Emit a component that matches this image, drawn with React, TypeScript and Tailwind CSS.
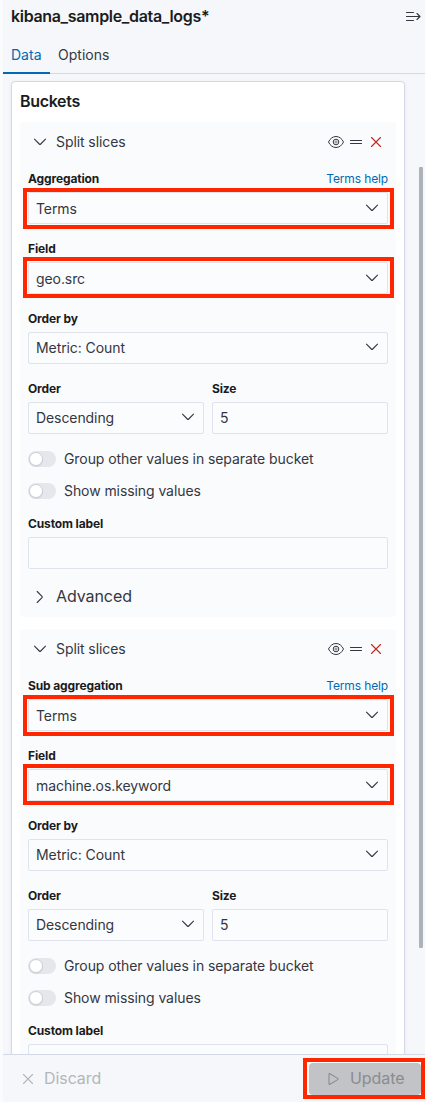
import React from "react";

type IconProps = { d: string; className?: string };

function Icon({ d, className = "" }: IconProps) {
  return (
    <svg
      viewBox="0 0 16 16"
      className={`h-4 w-4 shrink-0 ${className}`}
      fill="none"
      stroke="currentColor"
      strokeWidth="1.1"
      strokeLinecap="round"
      strokeLinejoin="round"
    >
      <path d={d} />
    </svg>
  );
}

function EyeIcon() {
  return (
    <svg viewBox="0 0 16 16" className="h-4 w-4 shrink-0" fill="none" stroke="currentColor">
      <path d="M.5 8C2.200 4.500 4.800 2.500 8 2.500S13.800 4.500 15.500 8C13.800 11.500 11.200 13.500 8 13.500S2.200 11.500.5 8Z" />
      <circle cx="8" cy="8" r="2.800" />
      <circle cx="8" cy="8" r="1.100" strokeWidth="0.6" />
    </svg>
  );
}

const CHEVRON_DOWN = "M2.5 5.2 7.3 10q.7.7 1.4 0l4.8-4.8";
const CHEVRON_RIGHT = "M5.2 2.5 10 7.3q.7.7 0 1.4l-4.8 4.8";
const CROSS = "M3.500 3.500l9 9M12.500 3.500l-9 9";
const GRAB = "M2.500 6.500h11M2.500 9.500h11";
const MENU_RIGHT = "M1.500 4.500h7M1.500 8.500h13.500M1.500 12.500h7M12 5.500l3 3-3 3";
const PLAY = "M4 3.200v9.600q0 1 .9.500l7.800-4.700q.8-.6 0-1.200L4.900 2.700Q4 2.200 4 3.200Z";

type Mark = "upper" | "lower";

type FieldProps = {
  label: string;
  value?: string;
  select?: boolean;
  help?: string;
  mark?: Mark;
};

function Field({ label, value = "", select = false, help, mark }: FieldProps) {
  return (
    <div className="flex min-w-0 flex-1 flex-col gap-1">
      <div className="flex h-[18px] items-center justify-between text-[12px] leading-[18px] tracking-[-0.13px]">
        <span className="font-bold text-[#1a1c21]">{label}</span>
        {help && <a className="text-[#006bb4]">{help}</a>}
      </div>
      <div className="relative flex h-8 items-start justify-between rounded-[2px] border border-[#e0e3ee] bg-[#fbfcfd] px-[7px]">
        <span className={mark ? "mt-1.5" : "mt-[5px]"}>{value}</span>
        {select && <Icon d={CHEVRON_DOWN} className={mark ? "mt-[7px]" : "mt-1.5"} />}
        {mark === "upper" && (
          <div className="absolute -top-[5px] -right-[7px] -bottom-[6px] -left-[6px] border-4 border-[#ff2600]" />
        )}
        {mark === "lower" && (
          <div className="absolute -top-[6px] -right-[7px] -bottom-[5px] -left-[6px] border-4 border-[#ff2600]" />
        )}
      </div>
    </div>
  );
}

function Toggle({ label }: { label: string }) {
  return (
    <div className="flex h-4 items-center gap-2">
      <span className="flex h-4 w-7 items-center rounded-full bg-[#e5e7ed] pl-px">
        <span className="h-3.5 w-3.5 rounded-full border border-[#cdcfd5] bg-white shadow-[0_1px_1px_rgba(0,0,0,0.08)]" />
      </span>
      <span>{label}</span>
    </div>
  );
}

type BucketProps = { aggregation: string; field: string; advanced?: boolean };

function Bucket({ aggregation, field, advanced = false }: BucketProps) {
  return (
    <section className="flex h-[495px] shrink-0 flex-col rounded bg-[#fafbfd] px-2">
      <div className="flex h-10 items-center pr-1 pl-1">
        <Icon d={CHEVRON_DOWN} />
        <span className="ml-2 grow">Split slices</span>
        <div className="flex items-center gap-1">
          <EyeIcon />
          <Icon d={GRAB} />
          <Icon d={CROSS} className="text-[#bd271e]" />
        </div>
      </div>
      <div className="flex flex-col gap-4 pt-2">
        <Field label={aggregation} value="Terms" select help="Terms help" mark="upper" />
        <Field label="Field" value={field} select mark="lower" />
        <Field label="Order by" value="Metric: Count" select />
        <div className="flex gap-2">
          <Field label="Order" value="Descending" select />
          <Field label="Size" value="5" />
        </div>
      </div>
      <div className="flex flex-col gap-4 pt-[17px] pb-4">
        <Toggle label="Group other values in separate bucket" />
        <Toggle label="Show missing values" />
      </div>
      <div className="flex">
        <Field label="Custom label" />
      </div>
      {advanced && (
        <div className="mt-4 flex h-6 items-center gap-2 pl-1 text-[16px]">
          <Icon d={CHEVRON_RIGHT} />
          <span className="-mt-0.5">Advanced</span>
        </div>
      )}
    </section>
  );
}

export default function App() {
  return (
    <div className="flex h-[1102px] w-[425px] flex-col overflow-hidden border-l-[3px] border-[#fafbfd] bg-[#f5f7fa] font-['Inter',sans-serif] text-[14px] leading-5 tracking-[-0.08px] text-[#343741]">
      <header className="flex h-[74px] shrink-0 flex-col border-b border-[#d3dae6]">
        <div className="flex h-8 items-center justify-between pr-1 pl-2">
          <h1 className="text-[16px] leading-6 font-semibold tracking-[-0.33px] text-[#1a1c21]">kibana_sample_data_logs*</h1>
          <Icon d={MENU_RIGHT} />
        </div>
        <nav className="-mb-px flex grow tracking-[0.02px]">
          <a className="flex w-[47px] items-start border-b-2 border-[#006bb4] px-2 pt-[13px] text-[#006bb4]">Data</a>
          <a className="flex items-start px-2 pt-[13px]">Options</a>
        </nav>
      </header>
      <main className="flex h-[980px] shrink-0 overflow-hidden pl-2">
        <div className="mt-[7px] flex h-[1100px] w-[394px] shrink-0 flex-col gap-3 rounded border border-[#d3dae6] bg-white px-2 shadow-[0_1px_3px_rgba(100,110,140,0.12)]">
          <h2 className="-mb-3 h-10 shrink-0 text-[16px] leading-[39px] font-semibold tracking-[-0.33px] text-[#1a1c21]">Buckets</h2>
          <Bucket aggregation="Aggregation" field="geo.src" advanced />
          <Bucket aggregation="Sub aggregation" field="machine.os.keyword" />
        </div>
        <div className="mt-[93px] ml-[14px] h-[781px] w-1 rounded-[1px] bg-[#aeb2bb]" />
      </main>
      <footer className="flex h-12 shrink-0 items-start justify-between border-t border-[#d3dae6] pl-[17px] text-[16px]">
        <button className="flex h-[47px] items-center gap-2 text-[#b4b6ba]">
          <Icon d={CROSS} />
          <span className="-mt-0.5">Discard</span>
        </button>
        <div className="mt-[3px] flex h-[41px] w-[122px] border-4 border-[#ff2600] bg-white pt-px pl-[2px]">
          <button className="flex h-8 w-28 items-center rounded bg-[#c2c3c6] pl-4 text-[#8b8c90]">
            <Icon d={PLAY} />
            <span className="-mt-0.5 ml-[9px]">Update</span>
          </button>
        </div>
      </footer>
    </div>
  );
}
